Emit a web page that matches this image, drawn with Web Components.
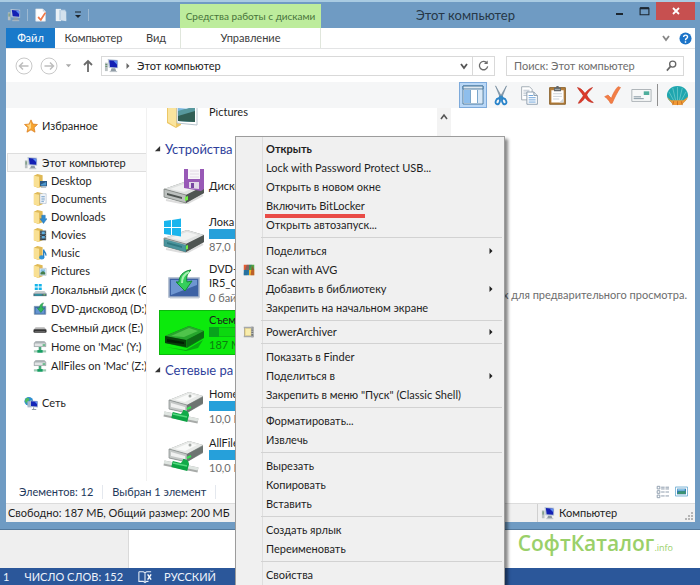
<!DOCTYPE html>
<html lang="ru">
<head>
<meta charset="utf-8">
<title>Этот компьютер</title>
<style>
html,body{margin:0;height:100%}
body{font:11px/14px Lato,"Open Sans",sans-serif;color:#1e1e1e;background:#fff;overflow:hidden}
</style>
</head>
<body>
<desk-top></desk-top>
<script>
const ICONS = {
computer:['0 0 16 16','<path d="M1 5h3v9H1z" fill="#b9c0c2"/><path d="M1.500 7h2M1.500 9h2" stroke="#5d8c62"/><path d="M4 1l11 1v9l-10-.5z" fill="#b8c6d6"/><path d="M5.500 2.300l8.500.700v7l-7.500-.5z" fill="#1420b4"/><path d="M10 3l4 .2v4z" fill="#5d8df0"/><path d="M8 11h4l1 3H7z" fill="#8f9ba5"/><path d="M6 14.500h8" stroke="#b6bec4"/>'],
star:['0 0 16 16','<path d="M8 1l2.200 4.800 5.200.500-3.900 3.600 1.100 5.200L8 12.400l-4.600 2.700 1.100-5.200L.6 6.300l5.200-.5z" fill="#f6a531" stroke="#d9791a" stroke-width=".8"/><path d="M8 3v7.500l-3.200 2 .8-3.500-2.600-2.300 3.600-.4z" fill="#ffd888"/>'],
network:['0 0 16 16','<circle cx="5.500" cy="6" r="5" fill="#2f8fd0"/><path d="M2 3c2-2 4-1 4 1S3 6 3 8 1 6 1 5zM6 8l3 1-2 2z" fill="#4dbb60"/><path d="M4 6h5v7H4z" fill="#a9b9cb"/><path d="M7 5l9 .7v7.300l-9-.7z" fill="#aebdd0"/><path d="M8 6l7 .5v5.500l-7-.5z" fill="#1526b8"/><path d="M12 6.300l3 .2v3z" fill="#6492f2"/><path d="M11 13v2.500M9 15.500h5" stroke="#7e8b97"/>'],
desktop:['0 0 16 16','F<rect x="8" y="8" width="8" height="6" fill="#2d5a86"/><path d="M9 12l6-3v4H9z" fill="#4f9ad0"/><path d="M9 15h6" stroke="#8796a2"/>'],
documents:['0 0 16 16','F<path d="M8 2h7v11H8z" fill="#fdfdfd" stroke="#9fb4c8" stroke-width=".7"/><path d="M9.500 5h4M9.500 7h4M9.500 9h4M9.500 11h3" stroke="#6f9bc7"/>'],
downloads:['0 0 16 16','F<path d="M10 6h4v4h2l-4 5.500L8 10h2z" fill="#2f8bd0" stroke="#1c6aa8" stroke-width=".5"/>'],
movies:['0 0 16 16','F<path d="M8 3h7v11H8z" fill="#34404a"/><path d="M10 4h3.500v3H10zM10 9h3.500v3H10z" fill="#62aee0"/><path d="M9 4v10M14.500 4v10" stroke="#ddd" stroke-dasharray="1 1" stroke-width=".7"/>'],
music:['0 0 16 16','F<ellipse cx="10" cy="13" rx="3" ry="2.300" fill="#2e93d8"/><path d="M12.200 13V4c0 3 3 3 2.500 7" stroke="#2680c4" stroke-width="1.500" fill="none"/>'],
pictures:['0 0 16 16','F<path d="M7.500 5h7.500v8H7.500z" fill="#fff" stroke="#a6b6c2" stroke-width=".7"/><path d="M8.500 6h5.500v6H8.500z" fill="#86c0e4"/><path d="M8.500 10l3-2 2.500 2v2H8.500z" fill="#447e4b"/>'],
localdisk:['0 0 16 16','<path d="M2 1h3.500v3H2zM6.500 1H10v3H6.500zM2 5h3.500v3H2zM6.500 5H10v3H6.500z" fill="#14b4ea"/><path d="M3 9h10l2.500 3H.5z" fill="#c5cacb"/><path d="M.5 12h15v3H.5z" fill="#4d6e7c"/><path d="M2 13h8v1.200H2z" fill="#20a8ba"/><path d="M12 13h2v1h-2z" fill="#8be15a"/>'],
dvdsmall:['0 0 16 16','<path d="M1.500 5h13v9h-13z" fill="#3f6cab" stroke="#7893ae"/><path d="M3 7l10-1v7H3z" fill="#6594d0"/><path d="M12 1C8 2 7.500 5 7.500 7H5l4 5 4-5h-2.500c0-2 0-4 1.500-6z" fill="#35b95c" stroke="#198340" stroke-width=".6"/>'],
removable:['0 0 16 16','<path d="M3 7h10l2.500 3H.5z" fill="#b6b6b6"/><rect x=".5" y="9.500" width="15" height="4" rx="1.500" fill="#343434"/><path d="M2 12h12" stroke="#6d6d6d"/>'],
netdrive:['0 0 16 16','<path d="M3 1h10l2 2.500V8H1V3.500z" fill="#b4babd"/><path d="M1.500 3.500h13v4h-13z" fill="#e1e4e5" stroke="#90999d" stroke-width=".6"/><path d="M11 5h3v1.500h-3z" fill="#39a867"/><path d="M8 8v4" stroke="#4aa77b" stroke-width="3"/><path d="M1 13h14" stroke="#9bcbb2" stroke-width="2.500"/><path d="M5 13h6" stroke="#159d62" stroke-width="3"/>'],
docCheck:['0 0 16 16','<path d="M2 1h8l3 3v11H2z" fill="#fff" stroke="#d9dfe4" stroke-width=".7"/><path d="M10 1v3h3" fill="#c9d2d9"/><path d="M4 11l1.500-1.500L7.500 12l4.500-7 2 .5L8 15z" fill="#ef7847"/>'],
folderNew:['0 0 16 16','<path d="M2 1h6v14H2z" fill="#eaf1f6"/><path d="M6 2h7l1 12H6z" fill="#bfd3e5"/><path d="M8 3l6 1v11l-6-1z" fill="#d3e1ed"/>'],
bigfolder:['0 0 32 32','<path d="M0 2l6-5 8 4v28l-5 3L0 27z" fill="#ecc766"/><path d="M1 3l8 4v24L1 26z" fill="#fae49d"/><path d="M10 1h20v28l-20-2z" fill="#fff" stroke="#b9c5ce"/><path d="M11 2h17v24l-17-1z" fill="#7ab7e0"/><path d="M11 15l17-5v16l-17-1z" fill="#57989d"/><path d="M11 20l17-5v11l-17-1z" fill="#315e54"/><path d="M11 8l8 2 9-3v3l-9 3-8-1z" fill="#c9e3f4"/>'],
floppy:['0 0 42 36','D<path d="M21 1h20v20l-3 2-17-3z" fill="#9859b6"/><path d="M25 1h12v10H25z" fill="#f8f6f9"/><path d="M27 3h9M27 6h9M27 9h9" stroke="#ddd3e1" stroke-width=".8"/><path d="M26 14h10v7l-10-1z" fill="#e2d8e8"/><path d="M28 15h3v5h-3z" fill="#7745a0"/>'],
winDisk:['0 0 42 36','D<path d="M1 22l22 6v7L1 29z" fill="#278692" opacity=".75"/><path d="M1 4l7-1v7H1zM9 3l9-1.500V10H9zM1 11h7v7l-7-1zM9 11h9v8.500L9 18z" fill="#19b5ed"/>'],
dvd:['0 0 42 36','<path d="M6 12h30v19H6z" fill="#3d62a4" stroke="#a4b3c8" stroke-width="1.500"/><path d="M8 14h26v5L8 29z" fill="#6e96d1"/><path d="M7 32h29" stroke="#c8cfd8"/><path d="M28 4c-8 1-12 6-12 12h-3l2 1-1 0 8 8 7-10-5 1c-1-5 0-8 4-12z" fill="#35ce5b" stroke="#168b38"/><path d="M26 6c-5 2-7 6-7 11" stroke="#a8f1b1" stroke-width="2" fill="none"/>'],
greenDrive:['0 0 42 36','<path d="M3 32l20 3 17-10-5 8-12 3z" fill="#09a912"/><path d="M2 21l24-10 15 5v7L24 33 2 28z" fill="#078210"/><path d="M2 21l24-10 15 5-18 9z" fill="#27a52d"/><path d="M8 21l18-8 9 3-14 6z" fill="#4fc44b"/><path d="M2 21l21 4v7L2 28z" fill="#063e08"/><path d="M4 24l17 3v2L4 27z" fill="#021e03"/><path d="M24 25l17-9v6l-17 10z" fill="#0d6a15"/>'],
netBig:['0 0 42 36','<path d="M6 11L26 3l14 4v8L24 24 6 20z" fill="#8d9290"/><path d="M6 11L26 3l14 4-16 9z" fill="#e7e9e7"/><path d="M12 11l14-6 8 2-12 6z" fill="#f9faf9"/><circle cx="27" cy="7" r="1.500" fill="#a6aaa7"/><path d="M6 11l18 5v8L6 20z" fill="#c4c8c6" stroke="#828886" stroke-width=".7"/><path d="M8 14l14 4v3L8 18z" fill="#f0f1f0"/><path d="M24 16l16-8v6l-16 10z" fill="#6d7471"/><path d="M24 20l4-2" stroke="#37e153" stroke-width="2"/><path d="M1 25l34 7" stroke="#a7aaa8" stroke-width="5"/><path d="M1 24l34 7" stroke="#dfe5e1" stroke-width="3"/><path d="M9 26l16 4" stroke="#0ba343" stroke-width="6"/><path d="M12 28c5-2 8-4 8-7 4 0 6 2 6 6z" fill="#12aa49"/><path d="M10 25l14 3" stroke="#54da7e" stroke-width="1.500"/>'],
panes:['0 0 24 24','<path d="M2 3h20v18H2z" fill="#fff" stroke="#48799f"/><path d="M2 3h20v3H2z" fill="#dfe8ef" stroke="#48799f"/><path d="M3 7h6v13H3z" fill="#8ebeec"/><path d="M10 7h7v13h-7z" fill="#fff"/><path d="M17 7h4v13h-4z" fill="#d8e8f7"/><path d="M9.500 7v13M16.500 7v13" stroke="#7ba6cb"/>'],
scissors:['0 0 24 24','<path d="M6 2l8 14-2 1zM18 2l-8 14 2 1z" fill="#8ba0b1" stroke="#647f93" stroke-width=".6"/><path d="M12 13l-2 3m2-3l2 3" stroke="#3589c4" stroke-width="3"/><ellipse cx="8.500" cy="19" rx="2.200" ry="3.200" transform="rotate(20 8.500 19)" fill="none" stroke="#2a84ca" stroke-width="2"/><ellipse cx="15.500" cy="19" rx="2.200" ry="3.200" transform="rotate(-20 15.500 19)" fill="none" stroke="#2a84ca" stroke-width="2"/>'],
copy:['0 0 24 24','<path d="M3 2h9l3 3v12H3z" fill="#fff" stroke="#9aa5af"/><path d="M5 6h7M5 8h7M5 10h7M5 12h5" stroke="#b4bfca"/><path d="M9 8h8l4 4v10H9z" fill="#fff" stroke="#8496a7"/><path d="M17 8v4h4" fill="#d9e4ed" stroke="#8496a7"/><path d="M11 12h5M11 14.500h8M11 17h8M11 19.500h8" stroke="#5b98d6"/>'],
paste:['0 0 24 24','<path d="M3 3h18v19H3z" fill="#b6803e" stroke="#82571f"/><path d="M5 6h14v14H5z" fill="#fff"/><path d="M14 20l5-5v5z" fill="#d1d6d9"/><path d="M7 10h10M7 13h10M7 16h7" stroke="#c2ccd4"/><path d="M8 3h2l1-2h2l1 2h2v4H8z" fill="#61666a"/><path d="M9 5h6" stroke="#b3babe"/>'],
cross:['0 0 24 24','<path d="M3 3c5 1 7 5 9 7 3-4 6-6 9-7-2 3-6 6-7 9 2 4 5 7 8 9-5 0-8-3-10-6-3 5-6 7-8 7 1-3 4-6 6-9C8 9 5 7 3 3z" fill="#dd3b2b" stroke="#b92618" stroke-width=".7"/>'],
check:['0 0 24 24','<path d="M2 14l4-2 4 4C12 10 15 5 18 2l3 1c-4 6-7 12-10 19H9c-2-4-4-6-7-8z" fill="#f37e45" stroke="#e06430" stroke-width=".7"/>'],
mail:['0 0 24 24','<path d="M2 6h21v13H2z" fill="#f7f8f8" stroke="#a9afb3"/><path d="M15 8h6v4h-6z" fill="#4fae9c"/><path d="M4 14h8M4 16h11" stroke="#7a8c9a"/>'],
shell:['0 0 24 24','<path d="M12 2c7 0 11 5 11 10 0 4-4 6-6 9H7c-2-3-6-5-6-9C1 7 5 2 12 2z" fill="#1fa6af"/><path d="M12 17V3M10 17L7 4M14 17l3-13M8 17L3 8M16 17l5-9" stroke="#79d0d0" stroke-width=".7"/><path d="M1 13c1 3 4 5 5 7l2 2h8l2-2c2-2 4-4 5-7-3 3-5 4-6 4H7c-2 0-4-1-6-4z" fill="#f09a35"/><path d="M8 18l-1 4M12 18v4M16 18l1 4" stroke="#c86f22"/>'],
avg:['0 0 16 16','<path d="M1 1h7v7H1z" fill="#e65c30"/><path d="M8 1h7v7H8z" fill="#4fa944"/><path d="M1 8h7v7H1z" fill="#2a7cae"/><path d="M8 8h7v7H8z" fill="#efb82e"/><path d="M5 1l7 0-7 14H1v-3z" fill="#23638b" opacity=".45"/><path d="M12 2l3 6v7h-5z" fill="#a73b2b" opacity=".7"/>'],
archiver:['0 0 16 16','<path d="M2 2h11v12H2z" fill="#efdb8f" stroke="#a59f81"/><path d="M4 4h6v8H4z" fill="#f8edad"/><path d="M11 1h3v14h-3z" fill="#707477"/><path d="M1 2h12M1 14h13" stroke="#a5a8aa" stroke-width="2"/><path d="M11 4h3M11 7h3M11 10h3" stroke="#d0d3d4"/>'],
book:['0 0 16 16','<path d="M1 2h5l2 1 2-1h5M1 2v11h5l2 1.500 2-1.500h2M8 3v11" fill="none" stroke="#e9eff8" stroke-width="1.200"/><path d="M11 5l4 6M15 5l-4 6" stroke="#fff" stroke-width="1.600"/>'],
listView:['0 0 16 16','<path d="M2.500 1.500h3v3h-3zM2.500 6.500h3v3h-3zM2.500 11.500h3v3h-3z" fill="#fff" stroke="#8797a8"/><path d="M7 2.500h4M12 2.500h4M7 4.500h4M12 4.500h4M7 8h4M12 8h4M7 12.500h4M12 12.500h4" stroke="#8090a2"/>'],
thumbView:['0 0 16 16','<path d="M.5 2.500h15v11H.5z" fill="#fff" stroke="#5ea4ce"/><path d="M2.500 4.500h11v7h-11z" fill="#2d78b4"/><path d="M3 10c3-4 5-1 10-3v4H3z" fill="#3b9371"/><path d="M3 5h9v2H3z" fill="#8cc7e8"/>'],
grip:['0 0 9 9','<path d="M7 1h2v2H7zM4 4h2v2H4zM7 4h2v2H7zM1 7h2v2H1zM4 7h2v2H4zM7 7h2v2H7z" fill="#b5b5b5"/>'],
back:['0 0 18 18','<circle cx="9" cy="9" r="8" fill="#fff" stroke="#c9c9c9"/><path d="M13.500 9h-9M8 5.500L4.500 9 8 12.500" fill="none" stroke="#bdbdbd" stroke-width="1.500"/>'],
forward:['0 0 18 18','<circle cx="9" cy="9" r="8" fill="#fff" stroke="#c9c9c9"/><path d="M4.500 9h9M10 5.500L13.500 9 10 12.500" fill="none" stroke="#bdbdbd" stroke-width="1.500"/>'],
up:['0 0 12 14','<path d="M6 13V2M2 6l4-4 4 4" fill="none" stroke="#6a6a6a" stroke-width="1.800"/>'],
caret:['0 0 8 8','<path d="M1 2.500h6L4 6z" fill="currentColor"/>'],
caretBar:['0 0 8 8','<path d="M1 1h6" stroke="#1d242b"/><path d="M1 4h6L4 7z" fill="#1d242b"/>'],
right:['0 0 8 8','<path d="M2 0l4 4-4 4z" fill="currentColor"/>'],
chevron:['0 0 10 10','<path d="M2 3l3 4 3-4" fill="none" stroke="currentColor" stroke-width="1.800"/>'],
refresh:['0 0 14 14','<path d="M10.800 4.500A4.500 4.500 0 1 0 11.500 8" fill="none" stroke="#6c6c6c" stroke-width="1.400"/><path d="M11.500 1.500v4h-4z" fill="#6c6c6c"/>'],
search:['0 0 14 14','<circle cx="8.300" cy="5.500" r="3.300" fill="none" stroke="#666" stroke-width="1.400"/><path d="M6 8l-4 4.500" stroke="#666" stroke-width="1.800"/>'],
help:['0 0 14 14','<circle cx="7" cy="7" r="6.500" fill="#1c74c8"/><path d="M5 5.500c0-3 4.200-2.600 4.200-.2C9.200 7 7 6.800 7 8.800M7 10v1.500" fill="none" stroke="#fff" stroke-width="1.500"/>'],
min:['0 0 10 10','<path d="M1 8h7" stroke="#1b2630" stroke-width="2"/>'],
max:['0 0 10 10','<path d="M1 2h8v6H1z" fill="none" stroke="#1b2630"/><path d="M1 2h8" stroke="#1b2630" stroke-width="2"/>'],
close:['0 0 10 10','<path d="M2 2l6 6M8 2L2 8" stroke="#fff" stroke-width="1.800"/>'],
fold:['0 0 8 8','<path d="M7 1v6H1z" fill="#333"/>'],
scrollUp:['0 0 10 10','<path d="M2 7l3-4 3 4" fill="none" stroke="#555" stroke-width="1.600"/>']
};
const FOLDER='<path d="M1 2l4-2 6 1.500V14l-5 2-5-2z" fill="#dfb956"/><path d="M1 2l6 1v13l-6-2z" fill="#f9e093"/>';
const DRIVE='<path d="M3 32l20 4 17-9" stroke="#ddd" stroke-width="2" fill="none"/><path d="M1 21l23-8 17 5v7L23 35 1 29z" fill="#868a88"/><path d="M1 21l23-8 17 5-18 9z" fill="#dfe1e0"/><path d="M7 21l17-6 11 3-14 6z" fill="#f1f2f1"/><path d="M1 21l22 6v8L1 29z" fill="#bcc0be" stroke="#777c79" stroke-width=".7"/><path d="M4 25l15 4v2L4 27z" fill="#4f5552"/><path d="M23 27l18-9v7l-18 10z" fill="#4f5552"/><path d="M22 29l3-1v4l-3 1z" fill="#72ee45"/>';

const define = (name, css, html) => {
  const tpl = document.createElement('template');
  customElements.define(name, class extends HTMLElement {
    constructor(){ super(); this.attachShadow({mode:'open'}); }
    connectedCallback(){
      tpl.innerHTML = `<style>*{box-sizing:border-box}button{font:inherit;color:inherit;background:none;border:0;padding:0;margin:0;text-align:left}a{color:inherit;text-decoration:none}${css}</style>` + (typeof html === 'function' ? html(this) : html);
      this.shadowRoot.replaceChildren(tpl.content.cloneNode(true));
    }
  });
};
const ic = (name, w, h = w) => `<ui-icon name="${name}" w="${w}" h="${h}"></ui-icon>`;

define('ui-icon', ':host{display:inline-flex;flex:none}svg{display:block}', el => {
  const [box, art] = ICONS[el.getAttribute('name')];
  const body = art.replace(/^F/, FOLDER).replace(/^D/, DRIVE);
  return `<svg viewBox="${box}" width="${el.getAttribute('w')}" height="${el.getAttribute('h')}" aria-hidden="true">${body}</svg>`;
});

define('title-bar', `
:host{display:grid;grid-template-columns:174px 141px 1fr auto;height:26px;color:#263747}
.quick{display:flex;align-items:center;gap:6px;padding-left:1px}
.quick i{width:1px;height:12px;background:#9db9d2}
.quick button{display:flex}
.group{margin-top:2px;background:#bdec9c;color:#47733a;text-align:center;font-size:10px;line-height:24px;white-space:nowrap}
h1{margin:0;font-size:13px;font-weight:400;line-height:26px;padding-left:95px;white-space:nowrap}
.win{display:flex;align-items:flex-start}
.win button{display:flex;justify-content:center;align-items:center;height:18px;width:24px}
.win .x{width:39px;background:#c75050}`,
`<div class="quick">${ic('computer',14)}<i></i><button aria-label="Свойства">${ic('docCheck',14)}</button><button aria-label="Новая папка">${ic('folderNew',14)}</button><button aria-label="Настройка панели">${ic('caretBar',8)}</button><i></i></div>
<div class="group">Средства работы с дисками</div><h1>Этот компьютер</h1>
<div class="win"><button aria-label="Свернуть">${ic('min',10)}</button><button aria-label="Развернуть">${ic('max',11)}</button><button class="x" aria-label="Закрыть">${ic('close',10)}</button></div>`);

define('ribbon-tabs', `
:host{display:grid;grid-template-columns:49px 77px 48px 141px 1fr auto;height:21px;background:#fff;border-bottom:1px solid #e3e4e5;color:#3c3c3c}
button{text-align:center}.file{background:#1979ca;color:#fff}.ctx{border:solid #e0e6dc;border-width:0 1px}
.end{display:flex;align-items:center;gap:8px;padding-right:3px;color:#888}.end button{display:flex}`,
`<button class="file">Файл</button><button>Компьютер</button><button>Вид</button><button class="ctx">Управление</button><span></span><div class="end"><button aria-label="Свернуть ленту">${ic('chevron',10)}</button><button aria-label="Справка">${ic('help',13)}</button></div>`);

define('address-bar', `
:host{display:flex;align-items:center;height:33px;background:#fff;padding:0 11px 0 9px;color:#222}
button{display:flex;align-items:center;justify-content:center}
.nav{display:flex;align-items:center;width:86px;gap:7px;color:#aaa}
.up{margin-left:3px}
.box{flex:1;display:flex;height:20px;border:1px solid #d9d9d9;margin-right:11px}
.path{gap:6px;padding-left:2px;flex:1;justify-content:flex-start;color:#222}.path ui-icon+ui-icon{color:#666}
.drop{width:16px;color:#555}.re{width:22px;border-left:1px solid #d9d9d9}
label{display:flex;align-items:center;width:178px;height:20px;border:1px solid #d9d9d9;padding:0 5px 0 7px}
input{font:inherit;border:0;outline:0;padding:0;min-width:0;flex:1;background:none}
input::placeholder{color:#6d6d6d;opacity:1}`,
`<div class="nav"><button aria-label="Назад">${ic('back',18)}</button><button aria-label="Вперёд">${ic('forward',18)}</button><button aria-label="Последние">${ic('caret',7)}</button><button class="up" aria-label="Вверх">${ic('up',12,14)}</button></div>
<div class="box"><button class="path">${ic('computer',15)}${ic('right',6)}Этот компьютер</button><button class="drop" aria-label="Журнал адресов">${ic('chevron',10)}</button><button class="re" aria-label="Обновить">${ic('refresh',13)}</button></div>
<label><input type="search" aria-label="Поиск" placeholder="Поиск: Этот компьютер">${ic('search',13)}</label>`);

define('tool-strip', `
:host{display:flex;justify-content:flex-end;height:26px;background:#f5f6f7;padding-right:4px}
button{display:flex;align-items:center;justify-content:center;width:28px}
.on{background:#b9d7f6;border:1px solid #7daadb}i{width:1px;margin:2px 5px 2px 2px;background:#8f8f8f}`,
`<button class="on" aria-label="Области">${ic('panes',24)}</button><button aria-label="Вырезать">${ic('scissors',22)}</button><button aria-label="Копировать">${ic('copy',21)}</button><button aria-label="Вставить">${ic('paste',21)}</button><button aria-label="Удалить">${ic('cross',20)}</button><button aria-label="Свойства">${ic('check',20)}</button><button aria-label="Отправить">${ic('mail',22)}</button><i></i><button aria-label="Classic Shell">${ic('shell',23)}</button>`);

define('nav-item', `
:host{display:block}
a{display:flex;align-items:center;gap:4px;height:var(--row,18px);padding-left:26px;white-space:nowrap}
:host([root]) a{height:19px;padding-left:16px;border:1px solid transparent}
:host([selected]) a{background:#f6f6f6;border-color:#dedede}`,
el => `<a href="#">${ic(el.getAttribute('icon'),14)}<slot></slot></a>`);

define('nav-tree', `
:host{display:block;padding:8px 1px 0;overflow:hidden;border-right:1px solid #f1f1f1}
nav{display:grid}.pc{margin:18px 0}.drives{--row:19px}`,
`<nav aria-label="Область переходов"><nav-item root icon="star">Избранное</nav-item>
<div class="pc"><nav-item root selected icon="computer">Этот компьютер</nav-item>
<nav-item icon="desktop">Desktop</nav-item><nav-item icon="documents">Documents</nav-item><nav-item icon="downloads">Downloads</nav-item><nav-item icon="movies">Movies</nav-item><nav-item icon="music">Music</nav-item><nav-item icon="pictures">Pictures</nav-item>
<div class="drives"><nav-item icon="localdisk">Локальный диск (C</nav-item><nav-item icon="dvdsmall">DVD-дисковод (D:) I</nav-item><nav-item icon="removable">Съемный диск (E:)</nav-item><nav-item icon="netdrive">Home on 'Mac' (Y:)</nav-item><nav-item icon="netdrive">AllFiles on 'Mac' (Z:)</nav-item></div></div>
<nav-item root icon="network">Сеть</nav-item></nav>`);

define('drive-tile', `
:host{display:flex;align-items:center;gap:4px;height:45px;margin:2px 0 2px 12px;padding-left:4px;flex:none;white-space:nowrap}
:host([selected]){background:#0cea0c;box-shadow:inset 0 0 0 1px #0cb80c}
.t{flex:1}.bar{height:10px;background:#26a0da}.bar i{display:block;height:100%}
:host([selected]) .bar{background:#0cd80f;box-shadow:inset 0 0 0 1px #0bbd10}
:host([selected]) .bar i{width:10px;background:#08a41c}
.sub{display:block;color:#6d6d6d;line-height:15px}:host([selected]) .sub{color:#0b7d10}`,
el => `${ic(el.getAttribute('icon'),el.hasAttribute('folder')?32:42,el.hasAttribute('folder')?32:36)}<div class="t"><slot></slot>${el.hasAttribute('bar')?'<div class="bar"><i></i></div>':''}${el.getAttribute('sub')?`<span class="sub">${el.getAttribute('sub')}</span>`:''}</div>`);

define('file-list', `
:host{display:flex;flex-direction:column;justify-content:flex-end;padding-bottom:1px;overflow:hidden}
h2{flex:none;display:flex;align-items:center;gap:4px;margin:0;padding-left:7px;height:25px;font-size:13px;font-weight:400;color:#2f3f9b;white-space:nowrap}
.pic{padding-left:8px;gap:10px}`,
`<drive-tile class="pic" folder icon="bigfolder">Pictures</drive-tile>
<h2>${ic('fold',7)}Устройства</h2>
<drive-tile icon="floppy">Диско</drive-tile>
<drive-tile icon="winDisk" bar sub="87,0 Г">Лока</drive-tile>
<drive-tile icon="dvd" sub="0 бай">DVD-<br>IR5_C</drive-tile>
<drive-tile selected icon="greenDrive" bar sub="187 М">Съем</drive-tile>
<h2>${ic('fold',7)}Сетевые ра</h2>
<drive-tile icon="netBig" bar sub="10,0 Г">Home</drive-tile>
<drive-tile icon="netBig" bar sub="10,0 Г">AllFile</drive-tile>`);

define('preview-pane', `
:host{display:grid;grid-template-columns:14px 1fr;color:#6d6d6d}
.scroll{background:#f3f3f3;text-align:center;padding-top:3px}
p{margin:0;align-self:center;justify-self:end;padding-right:8px;white-space:nowrap}`,
`<div class="scroll">${ic('scrollUp',10)}</div><p>ых для предварительного просмотра.</p>`);

define('details-bar', `
:host{display:flex;align-items:center;height:22px;padding:0 7px 0 13px;color:#1e395b}
span{padding-right:9px;margin-right:9px;border-right:1px solid #e4e8ee;white-space:nowrap}
div{margin-left:auto;display:flex;gap:6px}button{display:flex}`,
`<span>Элементов: 12</span><span>Выбран 1 элемент</span><div><button aria-label="Таблица">${ic('listView',14)}</button><button aria-label="Крупные значки">${ic('thumbView',13)}</button></div>`);

define('status-strip', `
:host{display:grid;grid-template-columns:1fr 158px;align-items:center;height:19px;background:#f0f0f0;border-top:1px solid #dcdcdc;padding-left:2px}
.pc{display:flex;align-items:center;gap:4px;height:18px;border-left:1px solid #d0d0d0;padding:0 2px 0 3px}.pc>:last-child{margin-left:auto;align-self:flex-end;padding-bottom:2px}`,
`<span>Свободно: 187 МБ, Общий размер: 200 МБ</span><div class="pc">${ic('computer',14)}<span>Компьютер</span>${ic('grip',9)}</div>`);

define('explorer-window', `
:host{display:flex;flex-direction:column;background:#6f9bc3;border-top:2px solid #a9cbe2;padding:0 5px 7px 6px;border-bottom:1px solid #54799c;box-sizing:border-box}
main{flex:1;min-height:0;display:grid;grid-template-columns:141px 290px 1fr;grid-template-rows:minmax(0,1fr)}
.body{flex:1;min-height:0;display:flex;flex-direction:column;background:#fff}`,
`<title-bar></title-bar><div class="body"><ribbon-tabs></ribbon-tabs><address-bar></address-bar><tool-strip></tool-strip><main><nav-tree></nav-tree><file-list></file-list><preview-pane></preview-pane></main><details-bar></details-bar><status-strip></status-strip></div>`);

define('menu-item', `
:host{display:block}
button{display:grid;grid-template-columns:30px 1fr 14px;align-items:center;width:100%;height:19px;line-height:19px;white-space:nowrap}
:host([compact]) button{height:16px;line-height:16px}
:host([default]){font-weight:700}
ui-icon:first-child{padding-left:7px}
:host([marked]) slot{display:inline-block;position:relative}
:host([marked]) slot::after{content:"";position:absolute;left:-1px;right:0;bottom:-3px;height:4px;background:#e94b46}`,
el => `<button role="menuitem">${el.getAttribute('icon')?ic(el.getAttribute('icon'),12):'<span></span>'}<span><slot></slot></span>${el.hasAttribute('sub')?ic('right',6):''}</button>`);

define('menu-group', `:host{display:block;padding:3px 0}
:host(:first-child){padding-top:2px}
:host(:not(:first-child)){border-top:1px solid transparent;border-image:linear-gradient(90deg,transparent 26px,#d2d2d2 26px) 1}`, '<slot></slot>');

define('context-menu', `
:host{display:block;background:linear-gradient(90deg,transparent 26px,#dedede 26px,#dedede 27px,transparent 27px) #f0f0f0;border:1px solid #9c9c9c;border-bottom:0;box-shadow:3px 3px 3px #0007;padding-right:2px;overflow:hidden}`,
`<div role="menu">
<menu-group><menu-item default>Открыть</menu-item><menu-item>Lock with Password Protect USB...</menu-item><menu-item>Открыть в новом окне</menu-item><menu-item marked>Включить BitLocker</menu-item><menu-item>Открыть автозапуск...</menu-item></menu-group>
<menu-group><menu-item sub>Поделиться</menu-item><menu-item icon="avg">Scan with AVG</menu-item><menu-item sub>Добавить в библиотеку</menu-item><menu-item>Закрепить на начальном экране</menu-item></menu-group>
<menu-group><menu-item compact sub icon="archiver">PowerArchiver</menu-item></menu-group>
<menu-group><menu-item>Показать в Finder</menu-item><menu-item sub>Поделиться в</menu-item><menu-item>Закрепить в меню "Пуск" (Classic Shell)</menu-item></menu-group>
<menu-group><menu-item>Форматировать...</menu-item><menu-item>Извлечь</menu-item></menu-group>
<menu-group><menu-item>Вырезать</menu-item><menu-item>Копировать</menu-item><menu-item>Вставить</menu-item></menu-group>
<menu-group><menu-item>Создать ярлык</menu-item><menu-item>Переименовать</menu-item></menu-group>
<menu-group><menu-item>Свойства</menu-item></menu-group></div>`);

define('word-window', `
:host{display:block}
.page{display:grid;grid-template-columns:129px 1fr;height:38px;background:#fff}
.side{background:#efefef;border-right:1px solid #dadada}
.logo{justify-self:end;padding-right:27px;line-height:26px;font-family:"Open Sans",sans-serif;font-size:21px;color:#9ad069;font-weight:600}.logo small{font-size:9px;font-weight:400}
footer{display:flex;align-items:center;height:17px;background:#2b579a;color:#eef3fa;padding-left:3px;gap:15px}
ui-icon{margin-right:-3px}`,
`<div class="page"><div class="side"></div><div class="logo">СофтКаталог<small>.info</small></div></div><footer><span>1</span><span>ЧИСЛО СЛОВ: 152</span>${ic('book',14)}<span>РУССКИЙ</span></footer>`);

define('desk-top', `
:host{display:flex;flex-direction:column;height:100vh;position:relative;overflow:hidden}
explorer-window{flex:1;min-height:0}
context-menu{position:absolute;left:235px;top:136px;bottom:0;width:270px;box-sizing:border-box}`,
`<explorer-window></explorer-window><word-window></word-window><context-menu></context-menu>`);
</script>
</body>
</html>
